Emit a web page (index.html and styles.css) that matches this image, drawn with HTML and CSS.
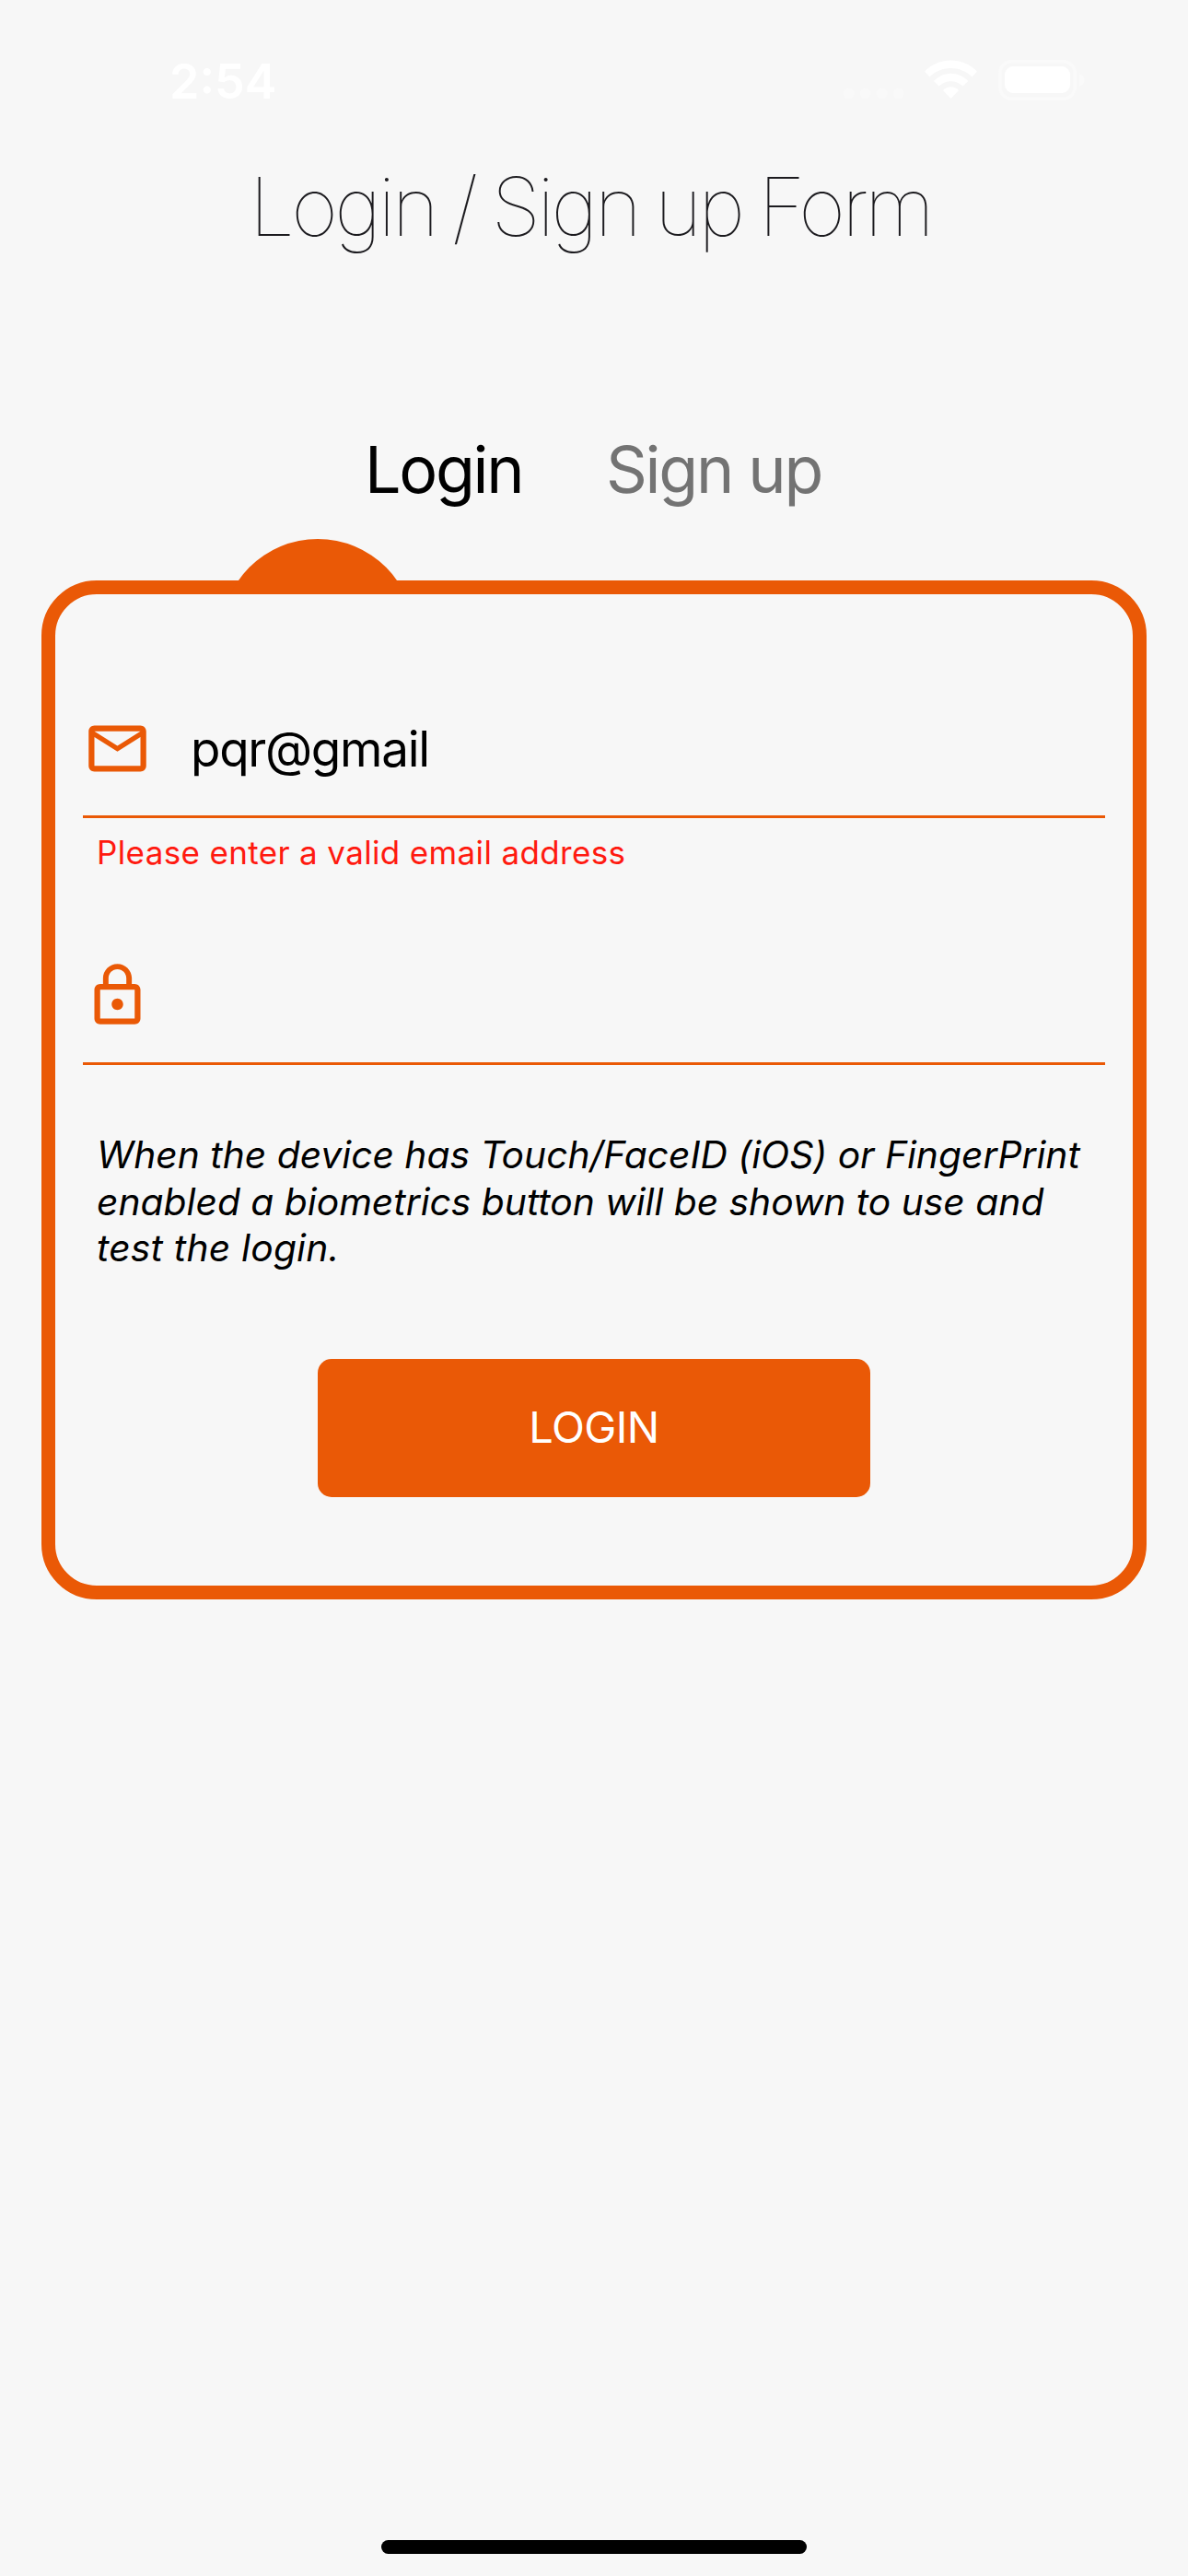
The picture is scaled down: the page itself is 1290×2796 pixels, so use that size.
FILE: index.html
```html
<!DOCTYPE html>
<html lang="en">
<head>
<meta charset="utf-8">
<title>Login / Sign up Form</title>
<link rel="stylesheet" href="styles.css">
</head>
<body>
<div class="screen">
  <header class="status-bar">
    <span class="time">2:54</span>
    <svg class="status-icons" width="260" height="50" viewBox="0 0 260 50">
      <g fill="#f9f9f9">
        <circle cx="11.7" cy="40.3" r="5.8"/><circle cx="29.7" cy="40.3" r="5.8"/><circle cx="47.7" cy="40.3" r="5.8"/><circle cx="65.7" cy="40.3" r="5.8"/>
      </g>
      <g fill="#fff">
        <path d="M94 16.5C109.500 .5 135.500 .5 151 16.500L145.500 22.500C133 9.800 112 9.800 99.500 22.500Z"/>
        <path d="M104 27C114.500 16 130.500 16 141.300 27L135.500 32.500C128 25.500 117 25.500 109.500 32.500Z"/>
        <path d="M114 37C119 32 126 32 131 37L122.500 46Z"/>
        <rect x="181" y="11" width="71" height="29" rx="9"/>
      </g>
      <rect x="175.700" y="5.700" width="81.600" height="40.600" rx="13" fill="none" stroke="#fafafa" stroke-width="3.500"/>
    </svg>
    <svg class="battery-tip" width="6" height="14" viewBox="0 0 6 14"><path d="M0 0Q5.500 2 5.500 7T0 14Z" fill="#fafafa"/></svg>
  </header>
  <h1 class="title">Login / Sign up Form</h1>
  <nav class="tabs">
    <a class="tab tab-active">Login</a>
    <a class="tab tab-signup">Sign up</a>
  </nav>
  <main class="card">
    <span class="marker"></span>
    <div class="field">
      <svg class="icon" viewBox="0 0 24 24"><path d="M22 6c0-1.100-.9-2-2-2H4c-1.100 0-2 .9-2 2v12c0 1.100.9 2 2 2h16c1.100 0 2-.9 2-2V6zm-2 0l-8 5-8-5h16zm0 12H4V8l8 5 8-5v10z"/></svg>
      <span class="value">pqr@gmail</span>
    </div>
    <p class="error">Please enter a valid email address</p>
    <div class="field field-password">
      <svg class="icon" viewBox="0 0 24 24"><path d="M12 17c1.100 0 2-.9 2-2s-.9-2-2-2-2 .9-2 2 .9 2 2 2zm6-9h-1V6c0-2.760-2.240-5-5-5S7 3.240 7 6v2H6c-1.100 0-2 .9-2 2v10c0 1.100.9 2 2 2h12c1.100 0 2-.9 2-2V10c0-1.100-.9-2-2-2zM8.900 6c0-1.710 1.390-3.100 3.100-3.100s3.100 1.390 3.100 3.100v2H8.900V6zM18 20H6V10h12v10z"/></svg>
    </div>
    <p class="note">When the device has Touch/FaceID (iOS) or FingerPrint<br>enabled a biometrics button will be shown to use and<br><span class="last-line">test the login.</span></p>
    <button class="login">LOGIN</button>
  </main>
  <div class="home"></div>
</div>
</body>
</html>
```
FILE: styles.css
```css
* { box-sizing: border-box; margin: 0; padding: 0; }
body { background: #f7f7f7; font-family: Inter, "Liberation Sans", sans-serif; color: #000; }
.screen { width: 1290px; height: 2796px; display: flex; flex-direction: column; background: #f7f7f7; overflow: hidden; }
.status-bar { height: 150px; display: flex; align-items: flex-start; padding: 62px 0 0 184px; color: #fff; }
.time { width: 726px; font-size: 52px; line-height: 54px; font-weight: 600; }
.status-icons { margin-top: -1px; }
.battery-tip { margin: 18px 0 0 2px; }
.title { height: 150px; text-align: center; font-size: 87.500px; line-height: 148px; font-weight: 100; letter-spacing: -3.700px; word-spacing: -3px; text-indent: -8px; color: #1c1b1f; white-space: nowrap; }
.tabs { height: 330px; display: flex; align-items: flex-start; padding: 160px 0 0 396px; font-size: 70px; line-height: 100px; letter-spacing: -2.300px; }
.tab { white-space: nowrap; }
.tab-active { width: 262px; }
.tab-signup { color: #737373; }
.card { position: relative; width: 1200px; height: 1106px; margin-left: 45px; border: 15px solid #ea5906; border-radius: 60px; padding: 105px 30px 0; display: flex; flex-direction: column; flex: none; }
.marker { position: absolute; left: 180px; top: -60px; width: 210px; height: 60px; overflow: hidden; }
.marker::before { content: ""; display: block; width: 210px; height: 210px; border-radius: 50%; background: #ea5906; }
.field { height: 138px; border-bottom: 3px solid #ea5906; display: flex; align-items: flex-start; padding-top: 25px; }
.icon { width: 75px; height: 75px; fill: #ea5906; flex: none; }
.value { margin-left: 42px; font-size: 53px; line-height: 76px; letter-spacing: -1.300px; }
.error { height: 130px; padding: 12px 0 0 15px; font-size: 35px; line-height: 50px; letter-spacing: 0.350px; color: #ff1a10; white-space: nowrap; }
.note { height: 319px; padding: 72px 0 0 15px; font-size: 40.800px; line-height: 50.500px; font-style: italic; letter-spacing: -0.020px; white-space: nowrap; }
.last-line { letter-spacing: 0.200px; }
.login { width: 600px; height: 150px; margin-left: 255px; padding-bottom: 2px; border: 0; border-radius: 15px; background: #ea5906; color: #fff; font: 400 47px/148px Inter, "Liberation Sans", sans-serif; letter-spacing: -0.600px; }
.home { width: 462px; height: 15px; border-radius: 8px; background: #000; margin: auto auto 24px; }
```
